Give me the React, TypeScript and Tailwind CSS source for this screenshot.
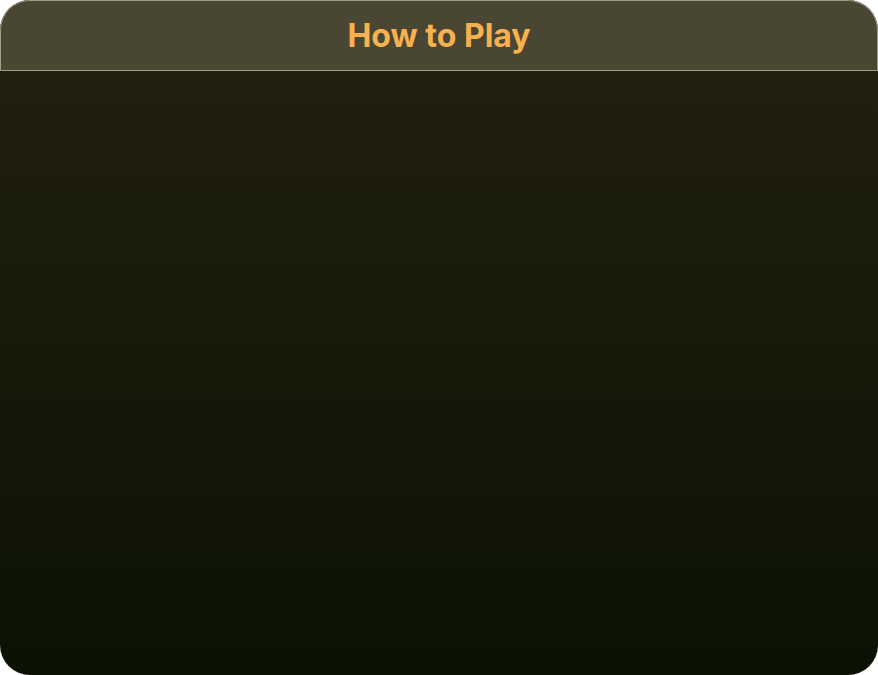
import React from 'react';

export default function App() {
  return (
    <div className="w-[878px] h-[675px] bg-white" style={{ fontFamily: 'Inter, "Noto Sans", sans-serif' }}>
      <div className="flex h-full flex-col overflow-hidden rounded-[30px] bg-gradient-to-b from-[#242110] to-[#0b1204]">
        <div className="flex h-[71px] items-center justify-center rounded-t-[30px] border border-[#a39f8e] bg-[#4a4634]">
          <h1 className="text-[32px] font-bold leading-none text-[#f8b14e]">How to Play</h1>
        </div>
        <div className="flex-1" />
      </div>
    </div>
  );
}
